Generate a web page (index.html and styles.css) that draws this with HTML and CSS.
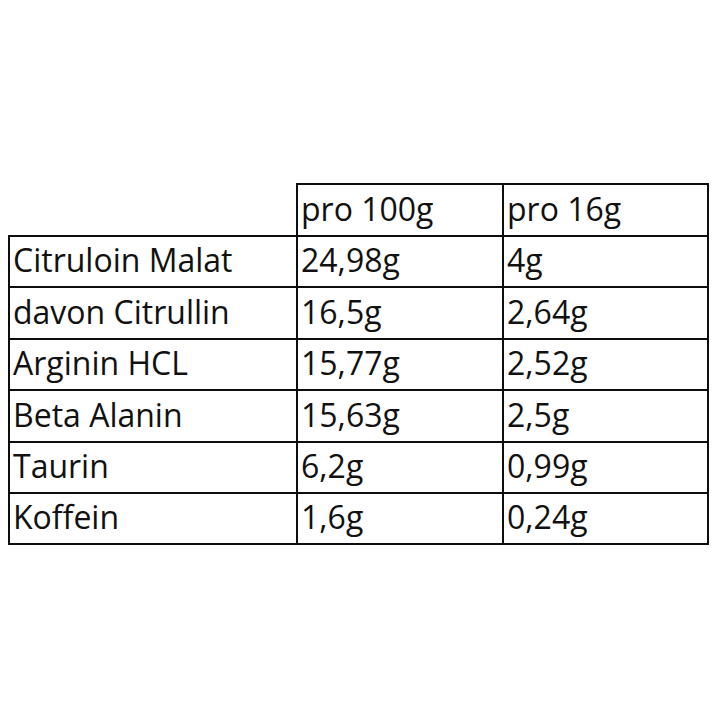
FILE: index.html
```html
<!DOCTYPE html>
<html lang="de">
<head>
<meta charset="utf-8">
<title>Nährwerte</title>
<link rel="stylesheet" href="styles.css">
</head>
<body>
<table class="nutri">
  <colgroup>
    <col class="col-name">
    <col class="col-a">
    <col class="col-b">
  </colgroup>
  <tr class="head">
    <td class="blank"></td>
    <td>pro 100g</td>
    <td>pro 16g</td>
  </tr>
  <tr><td>Citruloin Malat</td><td>24,98g</td><td>4g</td></tr>
  <tr><td>davon Citrullin</td><td>16,5g</td><td>2,64g</td></tr>
  <tr><td>Arginin HCL</td><td>15,77g</td><td>2,52g</td></tr>
  <tr><td>Beta Alanin</td><td>15,63g</td><td>2,5g</td></tr>
  <tr><td>Taurin</td><td>6,2g</td><td>0,99g</td></tr>
  <tr><td>Koffein</td><td>1,6g</td><td>0,24g</td></tr>
</table>
</body>
</html>
```
FILE: styles.css
```css
html, body {
  margin: 0;
  padding: 0;
  background: #ffffff;
}

.nutri {
  border-collapse: separate;
  border-spacing: 0;
  table-layout: fixed;
  width: 701px;
  margin: 183px 0 0 8px;
  font-family: "Open Sans", "Liberation Sans", sans-serif;
  font-size: 32px;
  line-height: 44px;
  color: #111111;
}

.col-name { width: 290px; }
.col-a { width: 206px; }
.col-b { width: 205px; }

.nutri td {
  box-sizing: border-box;
  height: 51.4px;
  padding: 0 0 4px 3px;
  vertical-align: bottom;
  white-space: nowrap;
  border-right: 2px solid #0d0d0d;
  border-bottom: 2px solid #0d0d0d;
}

.nutri td:first-child {
  border-left: 2px solid #0d0d0d;
}

.nutri .head td {
  border-top: 2px solid #0d0d0d;
  height: 54px;
}

.nutri .head td.blank {
  border-top: 0;
  border-left: 0;
}
```
